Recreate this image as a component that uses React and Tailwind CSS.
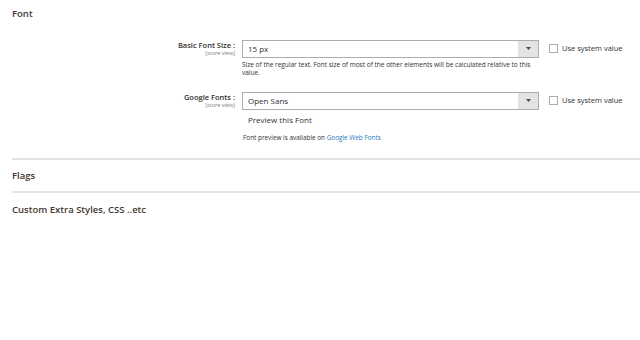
export default function App() {
  return (
    <div className="w-[640px] h-[340px] bg-white overflow-hidden text-[#303030]" style={{ fontFamily: '"Open Sans", sans-serif' }}>
      <div className="pl-[12px]">
        <h2 className="text-[9.5px] font-semibold leading-none pt-[9px] text-[#41362f]">Font</h2>

        <div className="mt-[21px] flex">
          <Label title="Basic Font Size :" />
          <div className="w-[297px] ml-[7px]">
            <Select value="15 px" />
            <p className="text-[6.5px] leading-[8.5px] text-[#303030] mt-[3px] pr-[4px]">
              Size of the regular text. Font size of most of the other elements will be calculated relative to this value.
            </p>
          </div>
          <UseSystem />
        </div>

        <div className="mt-[14px] flex">
          <Label title="Google Fonts :" />
          <div className="w-[297px] ml-[7px]">
            <Select value="Open Sans" />
            <div className="text-[8px] leading-none mt-[6px] ml-[6px] text-[#303030]">Preview this Font</div>
            <p className="text-[6.4px] leading-none mt-[11px] ml-[1px] text-[#303030]">
              Font preview is available on <span className="text-[#1979c3]">Google Web Fonts</span>
            </p>
          </div>
          <UseSystem />
        </div>

        <div className="mt-[17px] h-[2px] bg-[#e3e3e3]" />
        <h2 className="text-[9.5px] font-semibold leading-none mt-[11px] text-[#41362f]">Flags</h2>
        <div className="mt-[11px] h-[2px] bg-[#e3e3e3]" />
        <h2 className="text-[9.5px] font-semibold leading-none mt-[12px] text-[#41362f]">Custom Extra Styles, CSS ..etc</h2>
      </div>
    </div>
  )
}

function Label({ title }) {
  return (
    <div className="w-[223px] text-right pt-[2px]">
      <div className="text-[7.5px] font-semibold leading-none text-[#303030]">{title}</div>
      <div className="text-[5.5px] leading-none mt-[2px] text-[#808080]">[store view]</div>
    </div>
  )
}

function Select({ value }) {
  return (
    <div className="h-[18px] flex border border-[#adadad]">
      <div className="flex-1 text-[8px] leading-[16px] pl-[5px] text-[#303030]">{value}</div>
      <div className="w-[20px] bg-[#e3e3e3] flex items-center justify-center">
        <svg width="5" height="3" viewBox="0 0 5 3"><path d="M0 0h5L2.5 3z" fill="#514943" /></svg>
      </div>
    </div>
  )
}

function UseSystem() {
  return (
    <div className="ml-[10px] flex items-start pt-[4px]">
      <div className="w-[9px] h-[9px] border border-[#adadad] bg-white" />
      <span className="text-[7.5px] leading-[9px] ml-[4px] text-[#303030]">Use system value</span>
    </div>
  )
}
